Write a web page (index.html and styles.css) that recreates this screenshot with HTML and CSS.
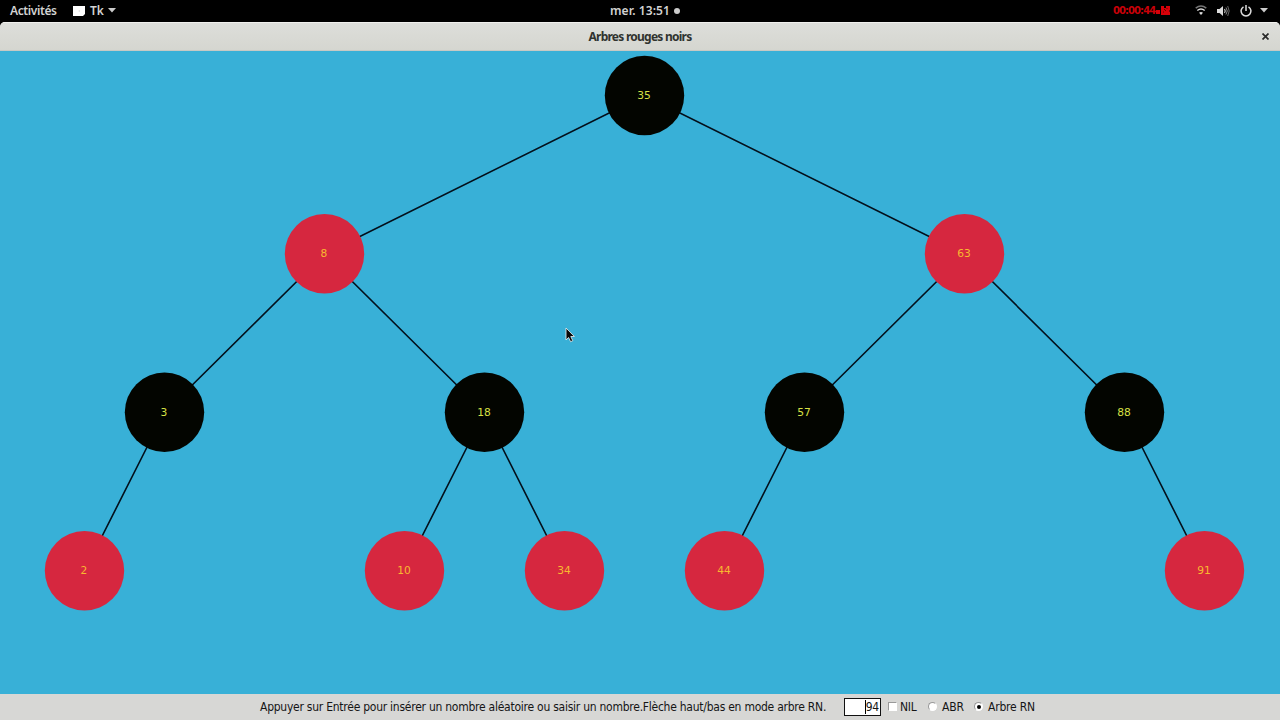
FILE: index.html
```html
<!DOCTYPE html>
<html lang="fr">
<head>
    <meta charset="UTF-8">
    <title>Arbres rouges noirs</title>
    <link rel="stylesheet" href="styles.css">
</head>
<body>
    <!-- Barre du bureau -->
    <div class="topbar">
        <div class="topbar-left">
            <span class="activities">Activités</span>
            <svg class="app-icon" width="12" height="10" viewBox="0 0 12 10">
                <path d="M0 0h12v8l-2 2H0z" fill="#fff"/>
                <path d="M5 5l2-1v2z" fill="#ddd"/>
            </svg>
            <span class="app-name">Tk</span>
            <svg width="8" height="5" viewBox="0 0 8 5"><path d="M0 0h8L4 4.5z" fill="#ccc"/></svg>
        </div>
        <div class="clock"><span class="clock-text">mer. 13:51</span><span class="dot"></span></div>
        <div class="topbar-right">
            <span class="timer">00:00:44</span>
            <svg class="camera" width="14" height="9" viewBox="0 0 14 9">
                <path d="M0 4h4v4H0zM5 0h3v2h2V0h4v4l-1 1 1 1v3H5z" fill="#d80008"/>
                <path d="M8 3l2 2M11 2v1M7 6h1" stroke="#600"/>
            </svg>
            <svg class="wifi" width="12" height="11" viewBox="0 0 12 11" fill="none" stroke-width="1.5">
                <path d="M.7 3.2q5.3-4.2 10.6 0" stroke="#777"/>
                <path d="M2.3 5.5q3.7-2.8 7.4 0" stroke="#ddd"/>
                <path d="M4 7.7q2-1.4 4 0L6 10z" fill="#ddd"/>
            </svg>
            <svg class="sound" width="13" height="12" viewBox="0 0 13 12" fill="none">
                <path d="M0 4h2.5L6 1v10L2.5 8H0z" fill="#ddd"/>
                <path d="M7.5 4q1.5 2 0 4" stroke="#ccc" stroke-width="1.2"/>
                <path d="M9 2.5q2.5 3.5 0 7" stroke="#888"/>
                <path d="M10.7 1q3 5 0 10" stroke="#666"/>
            </svg>
            <svg class="power" width="12" height="12" viewBox="0 0 12 12" fill="none" stroke="#ddd" stroke-width="1.5">
                <path d="M3.5 1.8a4.9 4.9 0 1 0 5 0M6 0v6"/>
            </svg>
            <svg class="arrow" width="8" height="5" viewBox="0 0 8 5"><path d="M0 0h8L4 4.5z" fill="#ccc"/></svg>
        </div>
    </div>

    <div class="window">
        <div class="titlebar">
            <span class="title">Arbres rouges noirs</span>
            <svg class="close" width="7" height="7" viewBox="0 0 7 7"><path d="M.5.5l6 6M6.5.5l-6 6" stroke="#2a2a2a" stroke-width="1.7"/></svg>
        </div>

        <!-- Arbre -->
        <svg class="tree" width="1280" height="643" viewBox="0 51 1280 643">
            <g class="edges">
                <path d="M644.5 95.5L324.5 254M644.5 95.5L964.5 254"/>
                <path d="M324.5 254L164.5 412.5M324.5 254L484.5 412.5"/>
                <path d="M964.5 254L804.5 412.5M964.5 254L1124.5 412.5"/>
                <path d="M164.5 412.5L84.5 571M484.5 412.5L404.5 571M484.5 412.5L564.5 571"/>
                <path d="M804.5 412.5L724.5 571M1124.5 412.5L1204.5 571"/>
            </g>
            <g class="black">
                <circle cx="644.5" cy="95.5" r="39.7"/><text x="644" y="99">35</text>
                <circle cx="164.5" cy="412.3" r="39.7"/><text x="164" y="416">3</text>
                <circle cx="484.5" cy="412.3" r="39.7"/><text x="484" y="416">18</text>
                <circle cx="804.5" cy="412.3" r="39.7"/><text x="804" y="416">57</text>
                <circle cx="1124.5" cy="412.3" r="39.7"/><text x="1124" y="416">88</text>
            </g>
            <g class="red">
                <circle cx="324.5" cy="253.8" r="39.7"/><text x="324" y="257.4">8</text>
                <circle cx="964.5" cy="253.8" r="39.7"/><text x="964" y="257.4">63</text>
                <circle cx="84.5" cy="570.7" r="39.7"/><text x="84" y="574">2</text>
                <circle cx="404.5" cy="570.7" r="39.7"/><text x="404" y="574">10</text>
                <circle cx="564.5" cy="570.7" r="39.7"/><text x="564" y="574">34</text>
                <circle cx="724.5" cy="570.7" r="39.7"/><text x="724" y="574">44</text>
                <circle cx="1204.5" cy="570.7" r="39.7"/><text x="1204" y="574">91</text>
            </g>
        </svg>

        <!-- Commandes -->
        <div class="controls">
            <span class="help">Appuyer sur Entrée pour insérer un nombre aléatoire ou saisir un nombre.Flèche haut/bas en mode arbre RN.</span>
            <div class="entry"><span class="caret"></span>94</div>
            <span class="box"></span>
            <span class="nil">NIL</span>
            <span class="radio"></span>
            <span class="abr">ABR</span>
            <span class="radio checked"></span>
            <span class="rn">Arbre RN</span>
        </div>
    </div>

    <svg class="pointer" width="10" height="16" viewBox="0 0 10 16">
        <path d="M1 1v12l2.6-2.5 2 4.2 2.2-1-2-4.2h3.6z" fill="#080808" stroke="#d8e4e8" stroke-width=".9"/>
    </svg>
</body>
</html>
```
FILE: styles.css
```css
body {
    margin: 0;
    width: 1280px;
    height: 720px;
    overflow: hidden;
    background: #000;
    font-family: "DejaVu Sans", sans-serif;
}
svg {
    display: block;
    flex: none;
}
.topbar {
    display: grid;
    grid-template-columns: 1fr auto 1fr;
    align-items: center;
    box-sizing: border-box;
    height: 22px;
    padding-bottom: 1px;
    color: #d2d2d2;
    font: 600 12px "Noto Sans", sans-serif;
    white-space: nowrap;
}
.topbar-left,
.topbar-right,
.clock {
    display: flex;
    align-items: center;
}
.topbar-left {
    padding-left: 10px;
}
.activities {
    width: 63px;
    letter-spacing: -0.4px;
}
.app-name {
    width: 14px;
    margin: 0 4px 0 5px;
}
.clock {
    padding-left: 10px;
}
.clock-text {
    width: 60px;
    letter-spacing: 0.1px;
}
.dot {
    width: 6px;
    height: 6px;
    margin-left: 4px;
    border-radius: 50%;
    background: #ccc;
}
.topbar-right {
    justify-content: flex-end;
    padding-right: 12px;
}
.timer {
    width: 43px;
    color: #c80008;
    font: bold 10px "DejaVu Sans", sans-serif;
    letter-spacing: -0.95px;
}
.camera {
    margin-right: 25px;
}
.wifi {
    margin-right: 10px;
}
.sound {
    margin-right: 10px;
}
.power {
    margin-right: 8px;
}
.window {
    background: #d7d7d5;
    border-radius: 5px 5px 0 0;
    overflow: hidden;
}
.titlebar {
    display: grid;
    grid-template-columns: 1fr auto 1fr;
    align-items: center;
    box-sizing: border-box;
    height: 29px;
    border-top: 1px solid #f0f0ed;
    border-bottom: 1px solid #c7c9c4;
    background: linear-gradient(#dddeda, #d5d6d0);
}
.title {
    grid-column: 2;
    color: #30332f;
    font: bold 12px "Noto Sans", sans-serif;
    font-stretch: semi-condensed;
    letter-spacing: -0.75px;
}
.close {
    justify-self: end;
    margin-right: 11px;
}
.tree {
    background: #38b0d7;
}
.edges {
    fill: none;
    stroke: #03101c;
    stroke-width: 1.6;
}
.black circle {
    fill: #030500;
}
.red circle {
    fill: #d6273f;
}
.tree text {
    font-size: 10.7px;
    text-anchor: middle;
}
.black text {
    fill: #d8e044;
}
.red text {
    fill: #f8b830;
}
.controls {
    display: flex;
    align-items: center;
    box-sizing: border-box;
    height: 26px;
    padding: 0 0 1px 260px;
    color: #151515;
    font: 12px "DejaVu Sans Condensed", "DejaVu Sans", sans-serif;
    font-stretch: condensed;
    letter-spacing: -0.2px;
    white-space: nowrap;
}
.help {
    width: 584px;
    letter-spacing: -0.25px;
}
.entry {
    display: flex;
    align-items: center;
    justify-content: flex-end;
    box-sizing: border-box;
    width: 37px;
    height: 18px;
    margin-top: 1px;
    padding-right: 1px;
    border: 1px solid #111;
    background: #fff;
}
.caret {
    width: 1px;
    height: 14px;
    background: #000;
}
.box {
    box-sizing: border-box;
    width: 9px;
    height: 9px;
    margin: 0 3px 0 7px;
    border: 1px solid;
    border-color: #999 #fff #fff #999;
    background: #fff;
}
.nil {
    width: 28px;
}
.radio {
    display: flex;
    align-items: center;
    justify-content: center;
    box-sizing: border-box;
    width: 9px;
    height: 9px;
    margin-right: 5px;
    border: 1px solid;
    border-color: #999 #fff #fff #999;
    border-radius: 50%;
    background: #fff;
}
.checked::after {
    content: "";
    width: 4px;
    height: 4px;
    border-radius: 50%;
    background: #000;
}
.abr {
    width: 32px;
}
.pointer {
    position: absolute;
    left: 565px;
    top: 327px;
}
```
